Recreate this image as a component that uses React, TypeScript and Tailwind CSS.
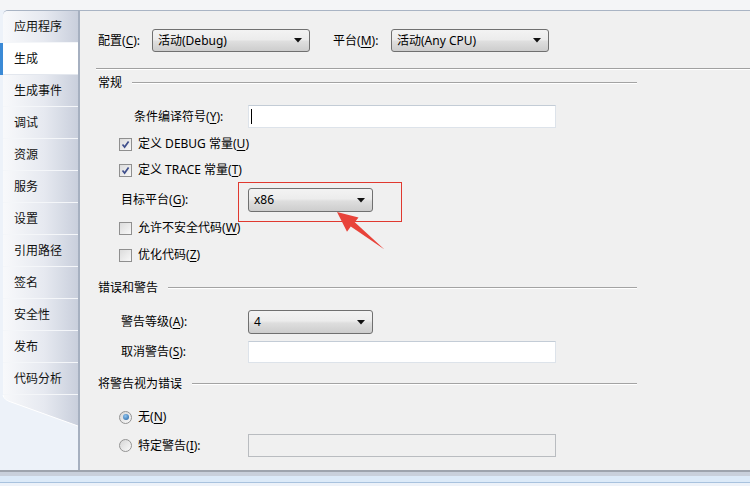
import React from "react";

const tabs = ["应用程序", "生成", "生成事件", "调试", "资源", "服务", "设置", "引用路径", "签名", "安全性", "发布", "代码分析"];

const Lbl = ({ t, k, colon = true }: { t: string; k: string; colon?: boolean }) => (
  <span className="whitespace-nowrap">
    {t}(<span className="underline underline-offset-2">{k}</span>){colon ? ":" : ""}
  </span>
);

const Combo = ({ value, w, h = 23 }: { value: string; w: string; h?: number }) => (
  <div
    className={`${w} ${h === 24 ? "h-[24px]" : "h-[23px]"} flex items-center justify-between pl-[5px] pr-[7px] rounded-[3px] border border-[#707070] bg-[linear-gradient(#f3f3f3,#ececec_45%,#dedede_55%,#cdcdcd)]`}
  >
    <span className="whitespace-nowrap">{value}</span>
    <svg width="8" height="5" viewBox="0 0 8 5">
      <path d="M0 0 H8 L4 4.5 Z" fill="#111" />
    </svg>
  </div>
);

const TextBox = ({ h = "h-[23px]", disabled = false, caret = false }: { h?: string; disabled?: boolean; caret?: boolean }) => (
  <div
    className={`w-[308px] ${h} flex items-center pl-[2px] border ${
      disabled ? "bg-[#f0f0f0] border-[#b9bcc0]" : "bg-white border-[#dde3ea] border-t-[#c3ccd6]"
    }`}
  >
    {caret && <div className="w-px h-[15px] bg-black" />}
  </div>
);

const Check = ({ on }: { on: boolean }) => (
  <div className="w-[13px] h-[13px] border border-[#8f8f8f] bg-[linear-gradient(135deg,#dcdcdc,#f8f8f8)] flex items-center justify-center shrink-0">
    {on && (
      <svg width="9" height="9" viewBox="0 0 9 9">
        <path d="M1.5 4.5 L3.6 7 L7.6 1.5" stroke="#3f4f8c" strokeWidth="1.7" fill="none" />
      </svg>
    )}
  </div>
);

const Radio = ({ on }: { on: boolean }) => (
  <div className="w-[13px] h-[13px] rounded-full border border-[#939393] bg-[linear-gradient(135deg,#d6d6d6,#fafafa)] flex items-center justify-center shrink-0">
    {on && <div className="w-[6px] h-[6px] rounded-full bg-[radial-gradient(circle_at_40%_35%,#8fc4f0,#1f5e9e)]" />}
  </div>
);

const Group = ({ title, mt }: { title: string; mt: string }) => (
  <div className={`${mt} w-[541px] h-4 flex items-center`}>
    <span className="ml-[2px] whitespace-nowrap">{title}</span>
    <div className="flex-1 ml-[10px] border-t border-[#a3a3a3] border-b border-b-white" />
  </div>
);

export default function App() {
  return (
    <div className="relative w-[750px] h-[486px] flex flex-col overflow-hidden bg-[#edf2f9] text-[12px] leading-4 text-black font-['Noto_Sans','Noto_Sans_CJK_SC',sans-serif]">
      <div className="h-[10px] shrink-0 bg-[#f4f5f7]" />

      <div className="flex h-[460px] shrink-0">
        {/* side tabs */}
        <div className="w-[78px] flex flex-col">
          <div className="flex flex-col border-t border-[#a9b4c4] rounded-tl-[5px] ml-[3px]">
            {tabs.map((t, i) => (
              <div key={t} className="relative h-[32px] flex">
                {i === 1 && <div className="absolute -left-[3px] top-0 w-[3px] h-full bg-[#3b8ad6]" />}
                <div
                  className={`flex-1 flex items-center pl-[11px] border-b ${
                    i === 1
                      ? "bg-white border-[#e3e7ee]"
                      : "bg-[linear-gradient(90deg,#f8f9fb,#e6e9f0_55%,#c9cfdc)] border-[#f4f6f9]"
                  } ${i === 0 ? "rounded-tl-[5px]" : ""} text-[#111]`}
                >
                  {t}
                </div>
              </div>
            ))}
          </div>
          <svg width="78" height="36" viewBox="0 0 78 36" className="shrink-0">
            <defs>
              <linearGradient id="tg" x1="0" x2="1" y1="0" y2="0">
                <stop offset="0" stopColor="#f8f9fb" />
                <stop offset="0.55" stopColor="#e6e9f0" />
                <stop offset="1" stopColor="#c9cfdc" />
              </linearGradient>
            </defs>
            <path d="M3 0 H78 V31 L11 7 Q4 5 3 0 Z" fill="url(#tg)" />
            <path d="M3 0 Q4 5 11 7 L78 31" stroke="#ffffff" strokeWidth="1" fill="none" />
          </svg>
        </div>

        {/* main panel */}
        <div className="flex-1 flex flex-col pl-[16px] bg-[#f0f0f0] border-t border-[#a9b4c4] border-l-2 border-l-[#a6b0c0]">
          <div className="mt-[18px] flex items-center h-[23px]">
            <div className="ml-[2px] w-[54px]">
              <Lbl t="配置" k="C" />
            </div>
            <Combo value="活动(Debug)" w="w-[158px]" />
            <div className="ml-[23px] w-[58px]">
              <Lbl t="平台" k="M" />
            </div>
            <Combo value="活动(Any CPU)" w="w-[158px]" />
          </div>

          <div className="mt-[16px] border-t border-[#a0a0a0] border-b border-b-white" />

          <Group title="常规" mt="mt-[5px]" />

          <div className="mt-[14px] flex items-center">
            <div className="ml-[38px] w-[114px]">
              <Lbl t="条件编译符号" k="Y" />
            </div>
            <TextBox caret />
          </div>

          <div className="mt-[8px] ml-[23px] h-4 flex items-center gap-[6px]">
            <Check on />
            <Lbl t="定义 DEBUG 常量" k="U" colon={false} />
          </div>
          <div className="mt-[10px] ml-[23px] h-4 flex items-center gap-[6px]">
            <Check on />
            <Lbl t="定义 TRACE 常量" k="T" colon={false} />
          </div>

          <div className="mt-[10px] flex items-center">
            <div className="ml-[25px] w-[127px]">
              <Lbl t="目标平台" k="G" />
            </div>
            <Combo value="x86" w="w-[125px]" h={24} />
          </div>

          <div className="mt-[8px] ml-[23px] h-4 flex items-center gap-[6px]">
            <Check on={false} />
            <Lbl t="允许不安全代码" k="W" colon={false} />
          </div>
          <div className="mt-[11px] ml-[23px] h-4 flex items-center gap-[6px]">
            <Check on={false} />
            <Lbl t="优化代码" k="Z" colon={false} />
          </div>

          <Group title="错误和警告" mt="mt-[17px]" />

          <div className="mt-[14px] flex items-center">
            <div className="ml-[25px] w-[127px]">
              <Lbl t="警告等级" k="A" />
            </div>
            <Combo value="4" w="w-[125px]" h={24} />
          </div>
          <div className="mt-[7px] flex items-center">
            <div className="ml-[25px] w-[127px]">
              <Lbl t="取消警告" k="S" />
            </div>
            <TextBox h="h-[22px]" />
          </div>

          <Group title="将警告视为错误" mt="mt-[13px]" />

          <div className="mt-[17px] ml-[23px] h-4 flex items-center gap-[6px]">
            <Radio on />
            <Lbl t="无" k="N" colon={false} />
          </div>
          <div className="mt-[9px] flex items-center">
            <div className="ml-[23px] w-[129px] flex items-center gap-[6px]">
              <Radio on={false} />
              <Lbl t="特定警告" k="I" />
            </div>
            <TextBox disabled />
          </div>
        </div>
      </div>

      {/* bottom frame */}
      <div className="shrink-0 border-t-2 border-[#9ea4ad] h-[6px] bg-[#c9d0db]" />
      <div className="shrink-0 h-[7px] bg-[#dceaf8] border-b border-[#a8c2de]" />

      {/* annotation */}
      <div className="absolute left-[238px] top-[182px] w-[164px] h-[40px] border border-[#e0392f]" />
      <svg className="absolute inset-0 pointer-events-none" width="750" height="486" viewBox="0 0 750 486">
        <path
          d="M337 212 L358.5 217.5 L354.8 222.2 L384.5 249.5 L350.8 226.6 L347 231.7 Z"
          fill="#e8433a"
        />
      </svg>
    </div>
  );
}
